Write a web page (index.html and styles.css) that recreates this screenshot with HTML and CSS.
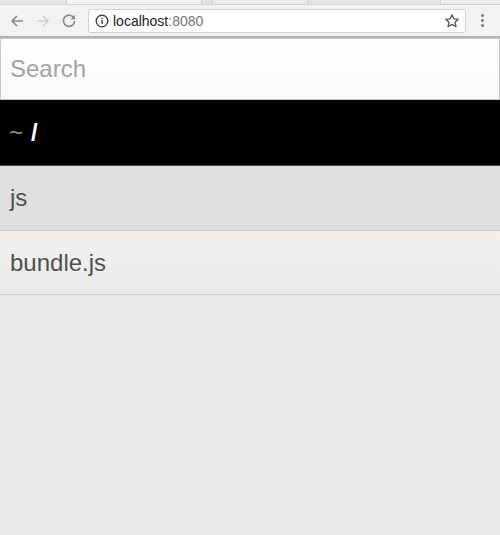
FILE: index.html
```html
<!DOCTYPE html>
<html>
<head>
<meta charset="utf-8">
<link rel="stylesheet" href="styles.css">
</head>
<body>
<div class="chrome">
  <div class="tabstrip">
    <div class="tab tab-a"></div>
    <div class="tab tab-b"></div>
    <div class="tab tab-c"></div>
  </div>
  <div class="toolbar">
    <div class="navs">
      <svg class="nav" width="16" height="16" viewBox="0 0 16 16"><path d="M14 8H3M8 3L3 8l5 5" fill="none" stroke="#8a8a8a" stroke-width="1.6"/></svg>
      <svg class="nav" width="16" height="16" viewBox="0 0 16 16"><path d="M2 8h11M8 3l5 5-5 5" fill="none" stroke="#cfcfcf" stroke-width="1.6"/></svg>
      <svg class="nav" width="16" height="16" viewBox="0 0 16 16"><path d="M13 5.2A5.6 5.6 0 1 0 13.6 8" fill="none" stroke="#8a8a8a" stroke-width="1.6"/><path d="M14 1.8V6.4H9.4z" fill="#8a8a8a"/></svg>
    </div>
    <div class="omnibox">
      <svg class="info" width="14" height="14" viewBox="0 0 14 14"><circle cx="7" cy="7" r="5.8" fill="none" stroke="#333" stroke-width="1.3"/><rect x="6.35" y="6" width="1.3" height="4" fill="#333"/><rect x="6.35" y="3.8" width="1.3" height="1.3" fill="#333"/></svg>
      <span class="host">localhost</span><span class="port">:8080</span>
      <svg class="star" width="16" height="16" viewBox="0 0 16 16"><path d="M8 1.8l1.9 4.1 4.4.4-3.3 3 1 4.4L8 11.4l-4 2.3 1-4.4-3.3-3 4.4-.4z" fill="none" stroke="#555" stroke-width="1.3" stroke-linejoin="round"/></svg>
    </div>
    <div class="menu"><span></span><span></span><span></span></div>
  </div>
</div>
<div class="page">
  <div class="search"><span class="placeholder">Search</span></div>
  <div class="crumb"><span class="tilde">~</span><span class="slash">/</span></div>
  <div class="row row-dir">js</div>
  <div class="row row-file">bundle.js</div>
</div>
</body>
</html>
```

FILE: styles.css
```css
html, body {
  margin: 0;
  padding: 0;
}
body {
  width: 500px;
  height: 535px;
  overflow: hidden;
  background: #ebe9e7;
  font-family: "Liberation Sans", Arial, sans-serif;
  display: flex;
  flex-direction: column;
}
.chrome {
  background: #f2f2f2;
  border-bottom: 2px solid #b3b3b3;
}
.tabstrip {
  height: 4px;
  background: #e4e4e4;
  position: relative;
  border-bottom: 1px solid #d6d6d6;
}
.tab {
  position: absolute;
  top: 0;
  height: 4px;
  background: #ececec;
  border: 1px solid #cfcfcf;
  border-top: none;
}
.tab-a { left: 66px; width: 134px; background: #f2f2f2; border-bottom: none; }
.tab-b { left: 212px; width: 94px; }
.tab-c { left: 440px; width: 70px; }
.toolbar {
  height: 31px;
  display: flex;
  align-items: center;
  padding: 0 0 0 9px;
}
.navs {
  display: flex;
  gap: 10px;
  align-items: center;
  width: 79px;
}
.nav { display: block; }
.omnibox {
  width: 378px;
  height: 24px;
  box-sizing: border-box;
  background: #fff;
  border: 1px solid #d2d2d2;
  border-radius: 3px;
  display: flex;
  align-items: center;
  padding: 0 0 0 6px;
  font-size: 14px;
}
.info { margin-right: 4px; }
.host { color: #222; }
.port { color: #777; flex: 1; }
.star { margin-right: 5px; }
.menu {
  width: 33px;
  display: flex;
  flex-direction: column;
  align-items: center;
  gap: 2px;
}
.menu span {
  width: 3px;
  height: 3px;
  border-radius: 50%;
  background: #777;
}
.page {
  flex: 1;
  display: flex;
  flex-direction: column;
}
.search {
  height: 62px;
  box-sizing: border-box;
  border: 1px solid #c8c8c8;
  background: linear-gradient(#ffffff, #f9f9f9);
  display: flex;
  align-items: center;
  padding-left: 9px;
  font-size: 24px;
}
.placeholder { color: #a3a3a3; }
.crumb {
  height: 65px;
  background: #000;
  display: flex;
  align-items: center;
  padding-left: 9px;
  font-size: 24px;
  gap: 8px;
  border-bottom: 1px solid #444;
}
.tilde { color: #8c8c8c; }
.slash { color: #fff; font-weight: bold; }
.row {
  height: 63px;
  display: flex;
  align-items: center;
  padding-left: 10px;
  font-size: 24px;
  color: #505050;
  border-bottom: 1px solid #cfcfcf;
}
.row-dir { background: #e0e0e0; height: 64px; }
.row-file { background: linear-gradient(#f1f0ef, #ebeae8); }
```
